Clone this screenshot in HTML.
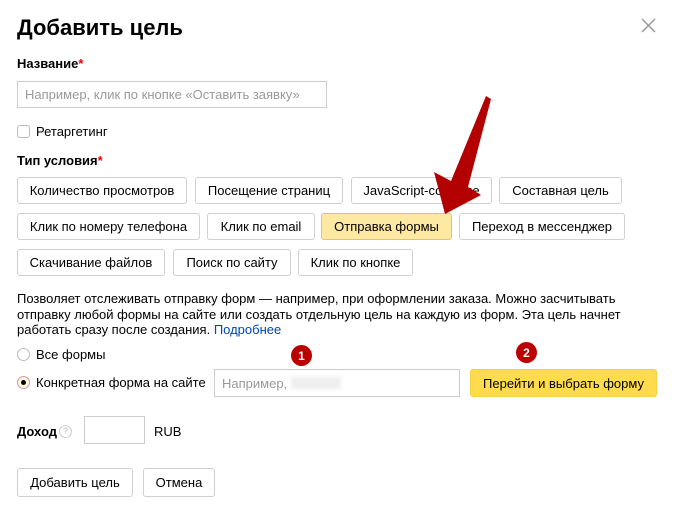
<!DOCTYPE html>
<html><head><meta charset="utf-8"><style>
*{box-sizing:border-box;margin:0;padding:0}
body{width:675px;height:513px;background:#fff;font-family:"Liberation Sans",Arial,sans-serif;color:#000;position:relative;overflow:hidden;font-size:13px}
.a{position:absolute;white-space:nowrap}
.b{position:absolute;border:1px solid #d0d0d0;border-radius:3px;background:#fff;font-size:13px;display:flex;align-items:center;justify-content:center;height:27px}
.lbl{font-weight:bold;font-size:13px}
.r{color:#e00}
.inp{position:absolute;border:1px solid #ccc;background:#fff;color:#999;font-size:13px;display:flex;align-items:center;padding-left:7px}
.rad{position:absolute;width:13px;height:13px;border-radius:50%;border:1px solid #bbb;background:#fff}
.badge{position:absolute;width:21px;height:21px;border-radius:50%;background:#b00;color:#fff;font-weight:bold;font-size:12px;display:flex;align-items:center;justify-content:center}
</style></head><body>
<div class="a" style="left:17px;top:15px;font-size:22px;font-weight:bold">Добавить цель</div>
<svg class="a" style="left:641px;top:18px" width="15" height="15"><path d="M1 1L14 14M14 1L1 14" stroke="#999" stroke-width="1.5"/></svg>
<div class="a lbl" style="left:17px;top:56px">Название<span class="r">*</span></div>
<div class="inp" style="left:17px;top:81px;width:310px;height:27px">Например, клик по кнопке «Оставить заявку»</div>
<div class="a" style="left:17px;top:125px;width:13px;height:13px;border:1px solid #bbb;border-radius:3px"></div>
<div class="a" style="left:36px;top:124px">Ретаргетинг</div>
<div class="a lbl" style="left:17px;top:153px">Тип условия<span class="r">*</span></div>
<div class="b" style="left:17px;top:177px;width:170px">Количество просмотров</div>
<div class="b" style="left:195px;top:177px;width:148px">Посещение страниц</div>
<div class="b" style="left:351px;top:177px;width:141px">JavaScript-событие</div>
<div class="b" style="left:499px;top:177px;width:123px">Составная цель</div>
<div class="b" style="left:17px;top:213px;width:183px">Клик по номеру телефона</div>
<div class="b" style="left:207px;top:213px;width:108px">Клик по email</div>
<div class="b" style="left:321px;top:213px;width:131px;background:#fee9a3;border-color:#e1c46a">Отправка формы</div>
<div class="b" style="left:459px;top:213px;width:166px">Переход в мессенджер</div>
<div class="b" style="left:17px;top:249px;width:148px">Скачивание файлов</div>
<div class="b" style="left:173px;top:249px;width:118px">Поиск по сайту</div>
<div class="b" style="left:298px;top:249px;width:115px">Клик по кнопке</div>
<div class="a" style="left:17px;top:291px;line-height:15.5px;white-space:normal;width:630px;font-size:13px">Позволяет отслеживать отправку форм — например, при оформлении заказа. Можно засчитывать отправку любой формы на сайте или создать отдельную цель на каждую из форм. Эта цель начнет работать сразу после создания. <span style="color:#04b">Подробнее</span></div>
<div class="rad" style="left:17px;top:348px"></div>
<div class="a" style="left:36px;top:347px">Все формы</div>
<div class="rad" style="left:17px;top:376px;background:#fff8e0;border-color:#c9a"><div style="width:5px;height:5px;background:#000;border-radius:50%;margin:3px"></div></div>
<div class="a" style="left:36px;top:375px">Конкретная форма на сайте</div>
<div class="inp" style="left:214px;top:369px;width:246px;height:28px">Например, <span style="display:inline-block;width:50px;height:12px;background:#eee;margin-left:4px;filter:blur(2px)"></span></div>
<div class="b" style="left:470px;top:369px;width:187px;height:28px;background:#ffdb4d;border-color:#f5d040">Перейти и выбрать форму</div>
<div class="badge" style="left:291px;top:345px">1</div>
<div class="badge" style="left:516px;top:342px">2</div>
<div class="a lbl" style="left:17px;top:424px">Доход</div>
<div class="a" style="left:59px;top:425px;width:13px;height:13px;border:1px solid #ccc;border-radius:50%;color:#bbb;font-size:9px;text-align:center;line-height:11px">?</div>
<div class="a" style="left:84px;top:416px;width:61px;height:28px;border:1px solid #ccc"></div>
<div class="a" style="left:154px;top:424px">RUB</div>
<div class="b" style="left:17px;top:468px;width:116px;height:29px">Добавить цель</div>
<div class="b" style="left:143px;top:468px;width:72px;height:29px">Отмена</div>
<svg class="a" style="left:0;top:0" width="675" height="513"><path d="M486 96L491 99L468 187L481 195L445 214L434 172L451 181Z" fill="#b30000"/></svg>
</body></html>
